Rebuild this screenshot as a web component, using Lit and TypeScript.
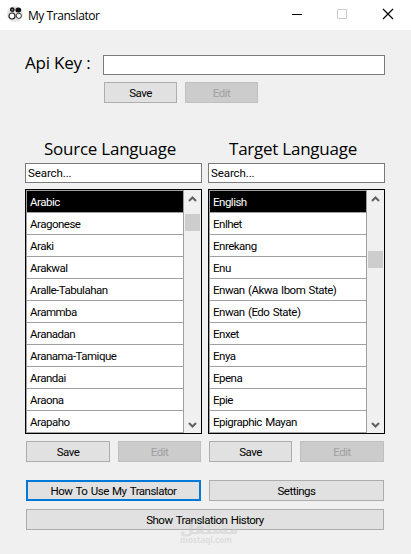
import {html, css, svg, LitElement} from 'lit';
import {customElement, property} from 'lit/decorators.js';
import {classMap} from 'lit/directives/class-map.js';

const sourceLanguages = [
  'Arabic', 'Aragonese', 'Araki', 'Arakwal', 'Aralle-Tabulahan', 'Arammba',
  'Aranadan', 'Aranama-Tamique', 'Arandai', 'Araona', 'Arapaho',
];

const targetLanguages = [
  'English', 'Enlhet', 'Enrekang', 'Enu', 'Enwan (Akwa Ibom State)',
  'Enwan (Edo State)', 'Enxet', 'Enya', 'Epena', 'Epie', 'Epigraphic Mayan',
];

@customElement('form-button')
export class FormButton extends LitElement {
  @property() label = '';
  @property({type: Boolean}) disabled = false;
  @property({type: Boolean}) focused = false;

  static styles = css`
    :host {
      display: block;
      height: 21px;
    }

    .button {
      display: block;
      box-sizing: border-box;
      width: 100%;
      height: 21px;
      padding: 1px 0 0;
      border: 1px solid #adadad;
      background-color: #e1e1e1;
      color: #000;
      font: 11.5px/18px Roboto, 'Noto Sans', sans-serif;
      letter-spacing: -0.5px;
      word-spacing: 1px;
      text-align: center;
    }

    .button.disabled {
      border-color: #bfbfbf;
      background-color: #cccccc;
      color: #a0a0a0;
    }

    .button.focused {
      padding: 0;
      border: 2px solid #0078d7;
    }
  `;

  render () {
    return html`
      <button
        class=${classMap({button: true, disabled: this.disabled, focused: this.focused})}
        ?disabled=${this.disabled}
      >${this.label}</button>
    `;
  }
}

@customElement('language-list')
export class LanguageList extends LitElement {
  @property({attribute: false}) items: string[] = [];
  @property({type: Number}) thumb = 0;

  static styles = css`
    :host {
      display: flex;
      box-sizing: border-box;
      height: 245px;
      border: 1px solid #000;
      background-color: #f0f0f0;
      font: 11.5px/22px Roboto, 'Noto Sans', sans-serif;
      letter-spacing: -0.5px;
      word-spacing: 1px;
      color: #000;
    }

    .rows {
      box-sizing: border-box;
      width: 158px;
      border: 1px solid #a0a0a0;
      border-bottom: 0;
    }

    .row {
      height: 21px;
      padding-left: 3px;
      border-bottom: 1px solid #a0a0a0;
      background-color: #fff;
      white-space: nowrap;
    }

    .row.selected {
      background-color: #000;
      color: #fff;
    }

    .scrollbar {
      display: flex;
      flex-direction: column;
      align-items: center;
      width: 17px;
    }

    .track {
      flex: 1;
      width: 15px;
    }

    .thumb {
      height: 17px;
      background-color: #cdcdcd;
    }

    .arrow {
      display: block;
      width: 17px;
      height: 17px;
      fill: none;
      stroke: #606060;
      stroke-width: 2;
    }
  `;

  render () {
    return html`
      <div class="rows">
        ${this.items.map((item, i) => html`
          <div class=${classMap({row: true, selected: i === 0})}>${item}</div>
        `)}
      </div>
      <div class="scrollbar">
        <svg class="arrow" viewBox="0 0 17 17"><path d="M5 11 8.5 7.5 12 11"/></svg>
        <div class="track">
          <div class="thumb" style="margin-top:${this.thumb}px"></div>
        </div>
        <svg class="arrow" viewBox="0 0 17 17"><path d="M5 7 8.5 10.5 12 7"/></svg>
      </div>
    `;
  }
}

const logo = svg`
  <circle cx="8" cy="8" r="8" fill="#e4e4e4"/>
  <circle cx="5.3" cy="3.7" r="1.7" fill="#777" stroke="#111" stroke-width="1.3"/>
  <ellipse cx="11.3" cy="4" rx="2.9" ry="2.5" fill="#111"/>
  <circle cx="5" cy="10" r="3" fill="#fff" stroke="#222" stroke-width="1.2"/>
  <circle cx="11.8" cy="9.8" r="2.6" fill="#fff" stroke="#333" stroke-width="1"/>
`;

@customElement('app-root')
export class AppRoot extends LitElement {
  static styles = css`
    :host {
      display: block;
      position: relative;
      width: 411px;
      height: 554px;
      overflow: hidden;
      background-color: #f0f0f0;
      font-family: 'Open Sans', 'Noto Sans', sans-serif;
      color: #000;
    }

    .titlebar {
      display: flex;
      align-items: center;
      height: 30px;
      padding-left: 7px;
      background-color: #fff;
    }

    .logo {
      width: 16px;
      height: 16px;
      margin-top: -2px;
    }

    .title {
      flex: 1;
      margin: 0 0 0 5px;
      font-size: 12px;
      letter-spacing: -0.45px;
    }

    .control {
      width: 46px;
      height: 30px;
      fill: none;
      stroke: #000;
    }

    .control.off {
      stroke: #ccc;
    }

    .content {
      padding: 25px 26px 0 25px;
    }

    .api {
      display: grid;
      grid-template-columns: 78px 282px;
      row-gap: 7px;
    }

    .api-label {
      font-size: 17px;
      line-height: 16px;
      letter-spacing: -0.2px;
      white-space: nowrap;
    }

    .pair {
      display: grid;
      grid-auto-flow: column;
      grid-auto-columns: 1fr;
      gap: 8px;
      padding: 0 1px;
    }

    .api .pair {
      grid-column: 2;
      grid-auto-columns: 73px;
    }

    .source .pair {
      grid-template-columns: 84px 83px;
    }

    .target .pair {
      grid-template-columns: 83px 84px;
    }

    .field {
      display: block;
      box-sizing: border-box;
      width: 100%;
      height: 20px;
      padding: 0 2px;
      border: 1px solid #7a7a7a;
      border-radius: 0;
      background-color: #fff;
      color: #000;
      font: 11.5px/18px Roboto, 'Noto Sans', sans-serif;
      letter-spacing: -0.1px;
    }

    .languages {
      display: grid;
      grid-template-columns: 177px 177px;
      gap: 6px;
      margin-top: 36px;
    }

    .heading {
      height: 24px;
      padding-right: 7px;
      font-size: 17px;
      line-height: 20px;
      letter-spacing: -0.25px;
      text-align: center;
      white-space: nowrap;
    }

    .languages language-list {
      margin: 6px 0 7px;
    }

    .actions {
      margin-top: 18px;
    }

    .history {
      margin: 8px 1px 0;
    }

    .watermark {
      position: absolute;
      left: 180px;
      top: 524px;
      width: 52px;
      color: #c8c8c8;
      opacity: 0.45;
      font-weight: 700;
      text-align: center;
    }

    .watermark-mark {
      height: 11px;
      font: 700 16px/9px 'DejaVu Sans', sans-serif;
    }

    .watermark-site {
      font-size: 8px;
      line-height: 9px;
    }
  `;

  renderLanguage (side: string, title: string, items: string[], thumb: number) {
    return html`
      <section class=${side}>
        <div class="heading">${title}</div>
        <input class="field" value="Search...">
        <language-list .items=${items} .thumb=${thumb}></language-list>
        <div class="pair">
          <form-button label="Save"></form-button>
          <form-button label="Edit" disabled></form-button>
        </div>
      </section>
    `;
  }

  render () {
    return html`
      <div class="titlebar">
        <svg class="logo" viewBox="0 0 16 16">${logo}</svg>
        <span class="title">My Translator</span>
        <svg class="control" viewBox="0 0 46 30"><path d="M19 14.5h10"/></svg>
        <svg class="control off" viewBox="0 0 46 30"><path d="M18.5 9.5h9v9h-9z"/></svg>
        <svg class="control" viewBox="0 0 46 30"><path d="M18 9l10 10M28 9l-10 10" stroke-width="1.2"/></svg>
      </div>
      <div class="content">
        <div class="api">
          <label class="api-label">Api Key :</label>
          <input class="field">
          <div class="pair">
            <form-button label="Save"></form-button>
            <form-button label="Edit" disabled></form-button>
          </div>
        </div>
        <div class="languages">
          ${this.renderLanguage('source', 'Source Language', sourceLanguages, 7)}
          ${this.renderLanguage('target', 'Target Language', targetLanguages, 44)}
        </div>
        <div class="pair actions">
          <form-button label="How To Use My Translator" focused></form-button>
          <form-button label="Settings"></form-button>
        </div>
        <form-button class="history" label="Show Translation History"></form-button>
      </div>
      <div class="watermark">
        <div class="watermark-mark">مستقل</div>
        <div class="watermark-site">mostaql.com</div>
      </div>
    `;
  }
}
